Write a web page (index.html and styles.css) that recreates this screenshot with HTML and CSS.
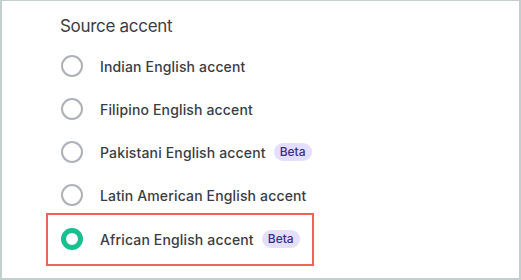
FILE: index.html
```html
<!DOCTYPE html>
<html>
	<head>
		<meta charset="UTF-8">
		<title>Source accent</title>
		<link rel="stylesheet" href="styles.css">
	</head>
	<body>
		<div class="card">
			<h2 class="title">Source accent</h2>
			<ul class="options">
				<li class="option">
					<span class="radio"></span>
					<span class="label">Indian English accent</span>
				</li>
				<li class="option">
					<span class="radio"></span>
					<span class="label">Filipino English accent</span>
				</li>
				<li class="option">
					<span class="radio"></span>
					<span class="label">Pakistani English accent</span>
					<span class="badge">Beta</span>
				</li>
				<li class="option">
					<span class="radio"></span>
					<span class="label">Latin American English accent</span>
				</li>
				<li class="option selected">
					<span class="radio"></span>
					<span class="label">African English accent</span>
					<span class="badge">Beta</span>
				</li>
			</ul>
		</div>
	</body>
</html>
```

FILE: styles.css
```css
html,body{
	margin: 0;
	padding: 0;
	height: 100%;
}
body{
	background: #c5cecf;
	font-family: Inter, "Noto Sans", sans-serif;
	color: #3a3d43;
	padding: 1px 2px 2px 2px;
	box-sizing: border-box;
}
.card{
	background: #fff;
	height: 100%;
	padding: 0 0 0 44px;
	box-sizing: border-box;
	overflow: hidden;
}
.title{
	margin: 0;
	padding: 14px 0 0 14px;
	font-size: 17px;
	font-weight: 400;
	line-height: 22px;
	letter-spacing: -0.3px;
	color: #3a3d43;
}
.options{
	list-style: none;
	margin: 0;
	padding: 7.5px 0 0 0;
}
.option{
	display: flex;
	align-items: center;
	width: fit-content;
	height: 43px;
	padding: 0 12px 0 13px;
	border: 2px solid transparent;
	box-sizing: border-box;
}
.option.selected{
	height: 53px;
	margin-top: -4px;
	border-color: #f2645a;
}
.radio{
	width: 22px;
	height: 22px;
	border: 2px solid #adb2b9;
	border-radius: 50%;
	box-sizing: border-box;
	flex: none;
}
.selected .radio{
	border: 5px solid #17c08e;
}
.label{
	margin-left: 17px;
	font-size: 14px;
	font-weight: 500;
	letter-spacing: 0.15px;
}
.badge{
	margin-left: 8px;
	padding: 1px 6px;
	border-radius: 9px;
	background: #e3dffc;
	color: #3a2e86;
	font-size: 12px;
	font-weight: 500;
	line-height: 16px;
}
```
